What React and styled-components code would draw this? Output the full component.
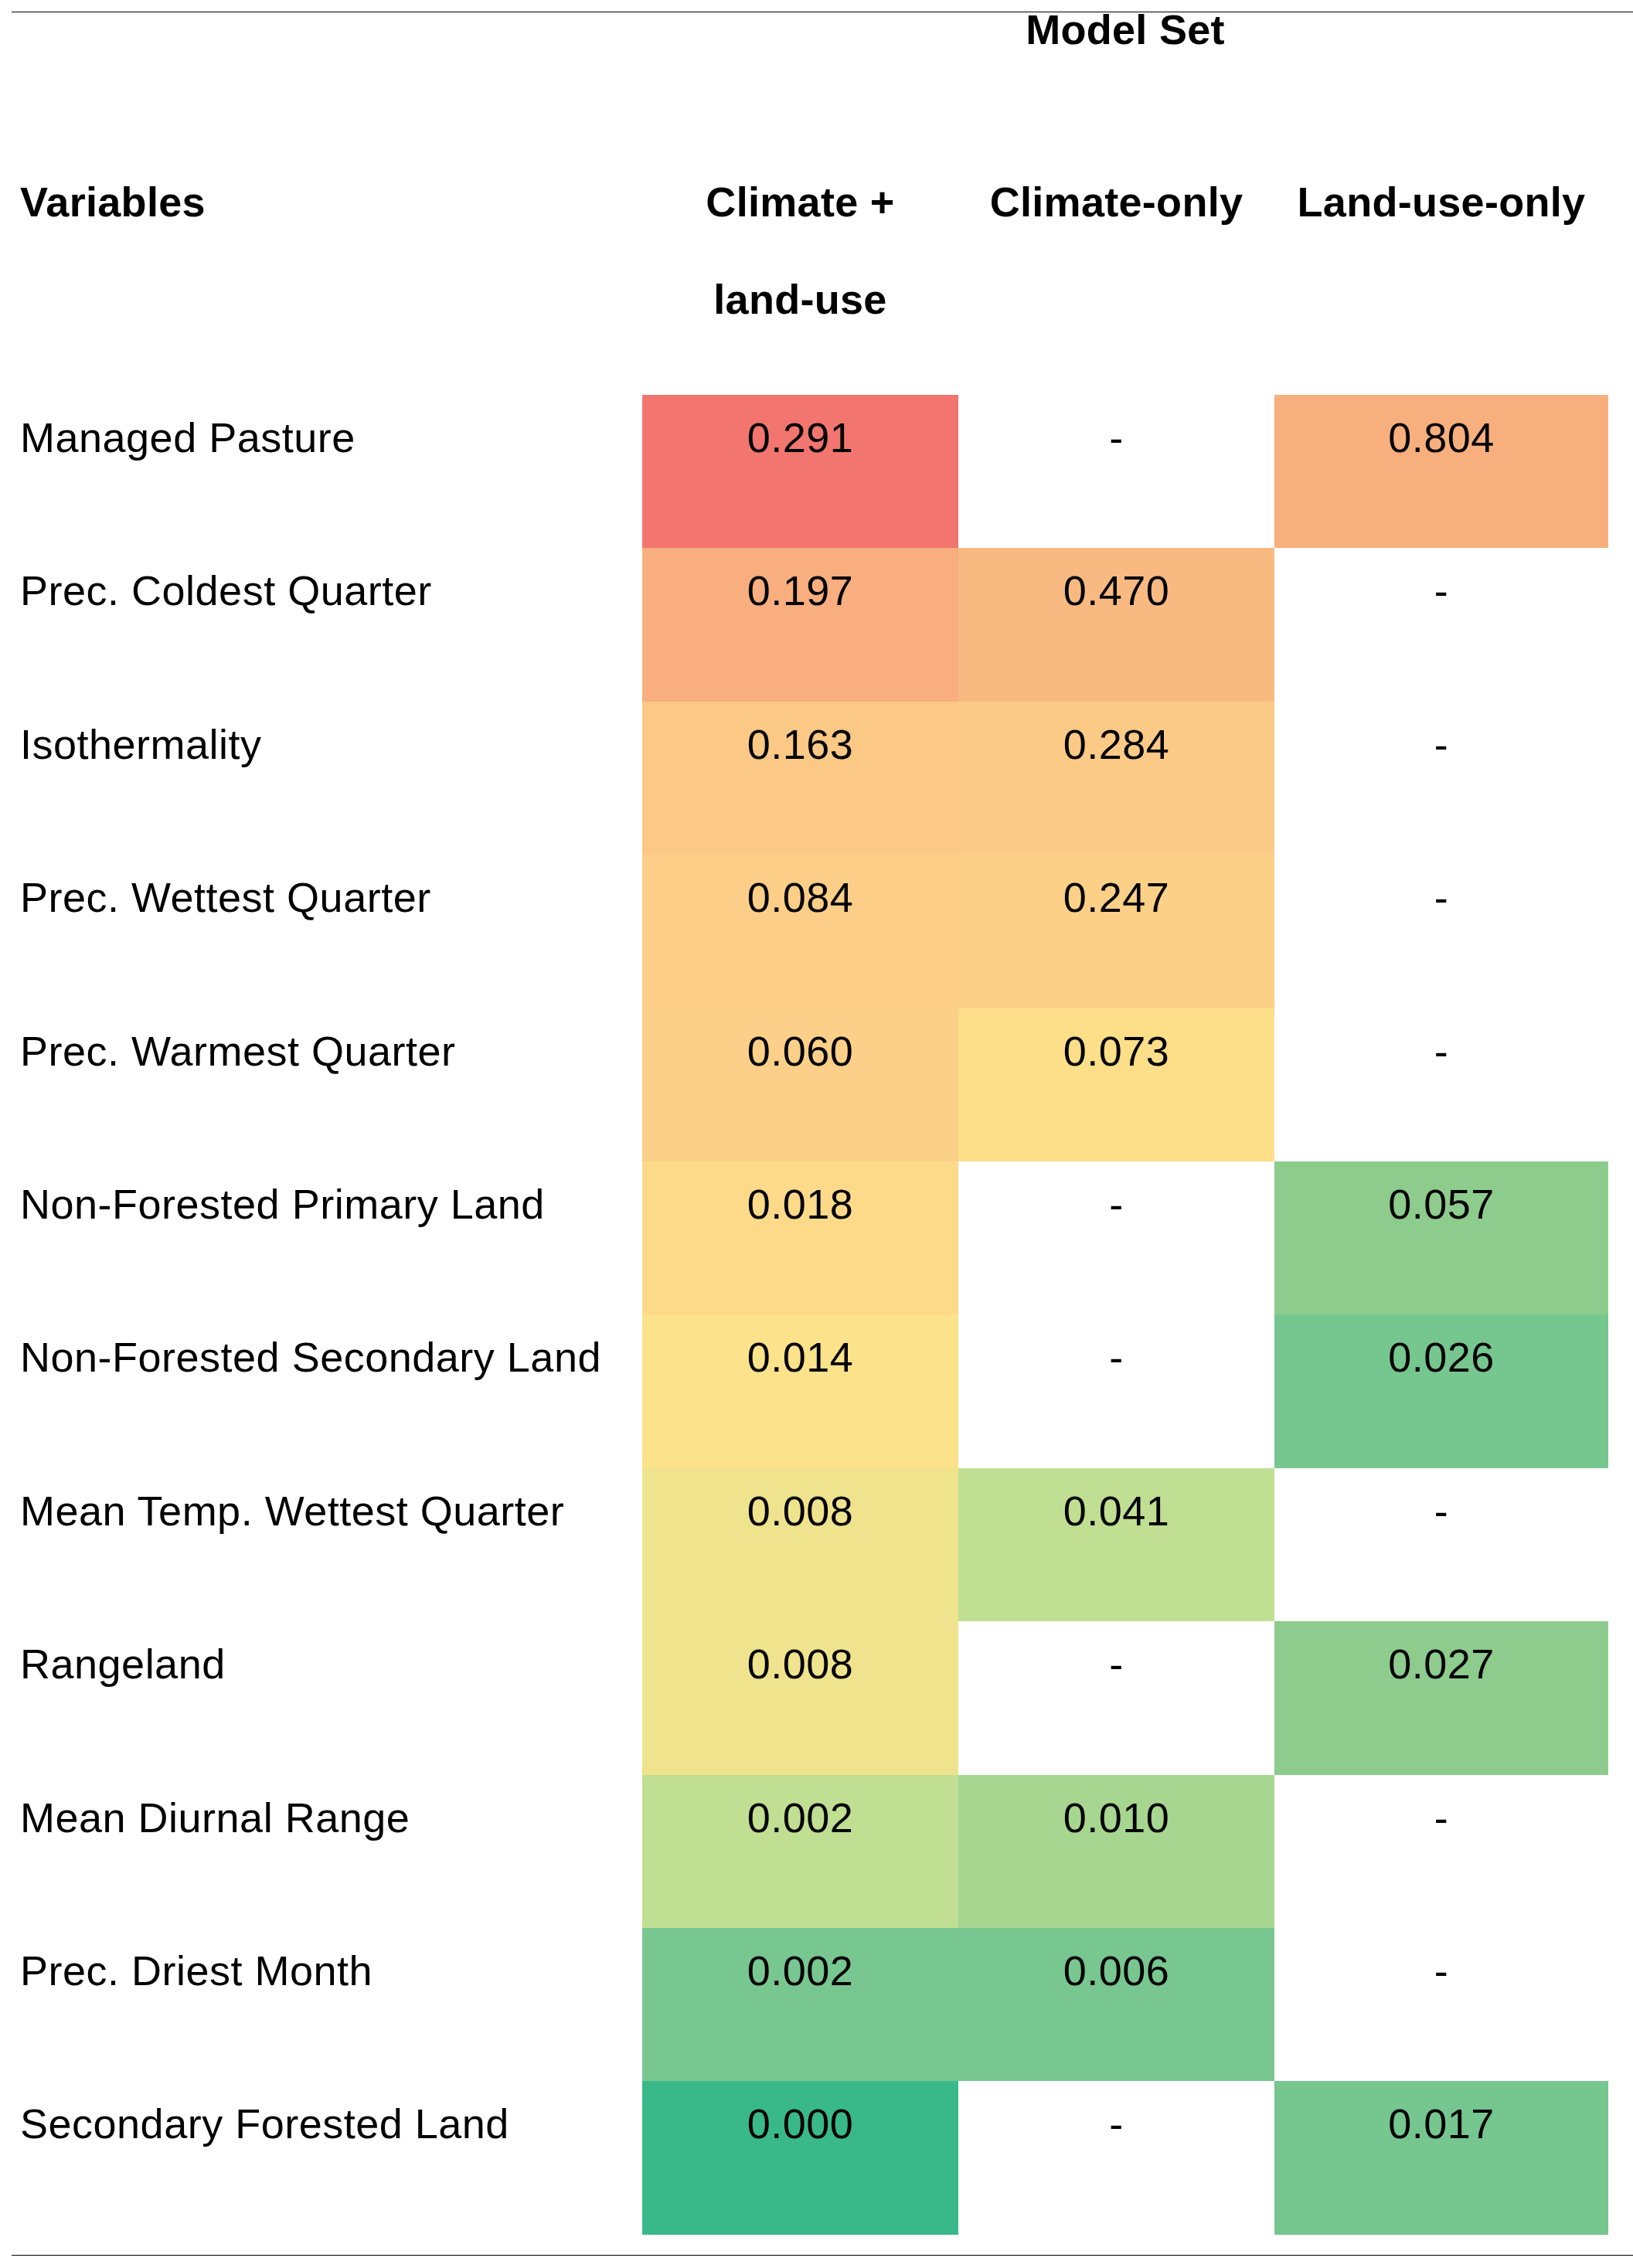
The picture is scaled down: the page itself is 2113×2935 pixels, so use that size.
import React from "react";
import styled, { createGlobalStyle } from "styled-components";

const Global = createGlobalStyle`
  html, body { margin: 0; padding: 0; background: #ffffff; }
  body { font-family: "Liberation Sans", Arial, sans-serif; color: #000; }
`;

const Page = styled.div`
  padding-top: 15px;
  padding-left: 15px;
`;

const Table = styled.section`
  border-top: 1px solid #000;
  border-bottom: 1px solid #000;
  padding-right: 32px;
  padding-bottom: 26px;
`;

const Grid = styled.div`
  display: grid;
  grid-template-columns: 816px 409px 409px 432px;
`;

const Title = styled.div`
  grid-column: 2 / 5;
  text-align: center;
  font-size: 54px;
  font-weight: 700;
  letter-spacing: 0.3px;
  line-height: 40px;
  padding-top: 2px;
  height: 182px;
  box-sizing: border-box;
`;

const HeadCell = styled.div`
  font-size: 54px;
  font-weight: 700;
  letter-spacing: 0.3px;
  line-height: 126px;
  padding-bottom: 61px;
  text-align: ${(p) => (p.$left ? "left" : "center")};
  padding-left: ${(p) => (p.$left ? "11px" : "0")};
  white-space: nowrap;
`;

const Label = styled.div`
  font-size: 54px;
  letter-spacing: 0.5px;
  line-height: 62px;
  height: 198.4px;
  box-sizing: border-box;
  padding-top: 24px;
  padding-left: 11px;
  white-space: nowrap;
`;

const Value = styled.div`
  font-size: 54px;
  letter-spacing: 0.5px;
  line-height: 62px;
  height: 198.4px;
  box-sizing: border-box;
  padding-top: 24px;
  text-align: center;
  background: ${(p) => p.$bg || "transparent"};
`;

const rows = [
  ["Managed Pasture", ["0.291", "#F2756F"], ["-"], ["0.804", "#F8AF7E"]],
  ["Prec. Coldest Quarter", ["0.197", "#F8AE7E"], ["0.470", "#F9BA82"], ["-"]],
  ["Isothermality", ["0.163", "#FCC886"], ["0.284", "#FCCA87"], ["-"]],
  ["Prec. Wettest Quarter", ["0.084", "#FCCE88"], ["0.247", "#FDD088"], ["-"]],
  ["Prec. Warmest Quarter", ["0.060", "#FCD088"], ["0.073", "#FDDE89"], ["-"]],
  ["Non-Forested Primary Land", ["0.018", "#FCDA8A"], ["-"], ["0.057", "#8DCC8C"]],
  ["Non-Forested Secondary Land", ["0.014", "#FCE28A"], ["-"], ["0.026", "#76C68F"]],
  ["Mean Temp. Wettest Quarter", ["0.008", "#F0E38D"], ["0.041", "#C0DF92"], ["-"]],
  ["Rangeland", ["0.008", "#F0E38D"], ["-"], ["0.027", "#8DCC8C"]],
  ["Mean Diurnal Range", ["0.002", "#C0DF92"], ["0.010", "#A6D68F"], ["-"]],
  ["Prec. Driest Month", ["0.002", "#78C690"], ["0.006", "#78C690"], ["-"]],
  ["Secondary Forested Land", ["0.000", "#39B98A"], ["-"], ["0.017", "#76C68F"]],
];

export default function App() {
  return (
    <>
      <Global />
      <Page>
        <Table>
          <Grid>
            <div />
            <Title>Model Set</Title>
            <HeadCell $left>Variables</HeadCell>
            <HeadCell>
              Climate +
              <br />
              land-use
            </HeadCell>
            <HeadCell>Climate-only</HeadCell>
            <HeadCell>Land-use-only</HeadCell>
            {rows.map(([label, ...vals]) => (
              <React.Fragment key={label}>
                <Label>{label}</Label>
                {vals.map(([v, bg], i) => (
                  <Value key={i} $bg={bg}>
                    {v}
                  </Value>
                ))}
              </React.Fragment>
            ))}
          </Grid>
        </Table>
      </Page>
    </>
  );
}
